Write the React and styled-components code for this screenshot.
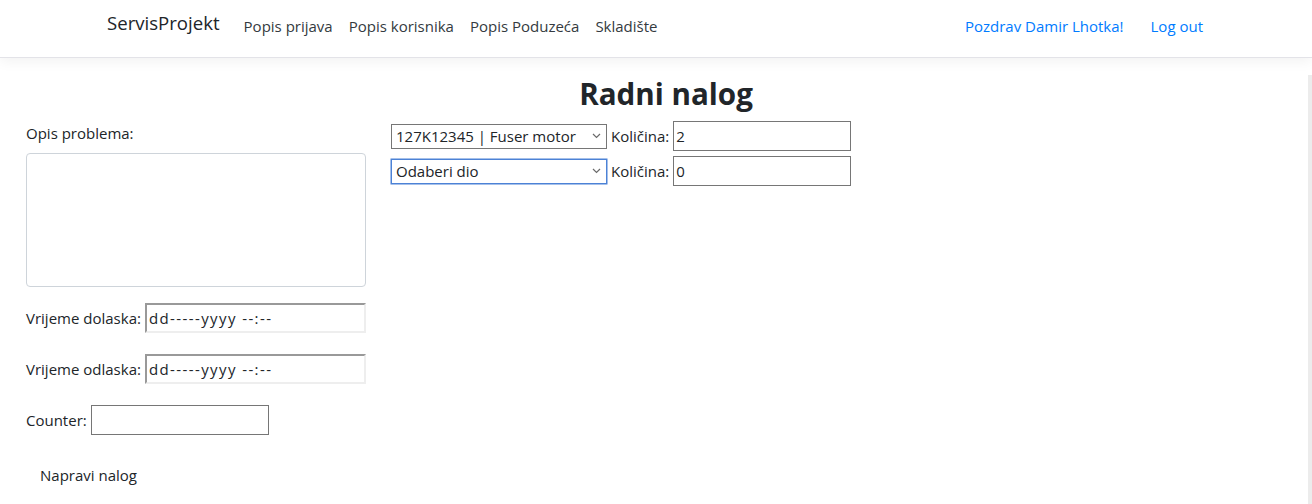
import React from "react";
import styled, { createGlobalStyle } from "styled-components";

const GlobalStyle = createGlobalStyle`
  html, body { margin: 0; padding: 0; background: #fff; }
  body {
    font-family: "Open Sans", "Noto Sans", sans-serif;
    font-size: 15px;
    color: #212529;
  }
  * { box-sizing: border-box; }
`;

const Page = styled.div`
  display: flex;
  width: 1312px;
  min-height: 504px;
`;

const Main = styled.div`
  flex: 1;
  display: flex;
  flex-direction: column;
`;

const ScrollStrip = styled.div`
  width: 4px;
  margin-top: 75px;
  background: #ececec;
`;

const Navbar = styled.nav`
  height: 58px;
  border-bottom: 1px solid #e3e3e8;
  box-shadow: 0 4px 12px rgba(0, 0, 0, 0.05);
  background: #fff;
  margin-right: -4px;
`;

const NavInner = styled.div`
  width: 1098px;
  margin: 0 auto;
  height: 100%;
  display: flex;
  align-items: center;
`;

const Brand = styled.a`
  font-size: 18.6px;
  color: #212529;
  margin-right: 16px;
  margin-top: -12px;
  text-decoration: none;
`;

const NavLinks = styled.div`
  display: flex;
  align-items: center;
  margin-top: -5px;
  margin-right: ${(p) => p.$mr || 0}px;
`;

const NavLink = styled.a`
  padding: 0 8px;
  font-size: 15px;
  color: ${(p) => (p.$accent ? "#007bff" : "#343a40")};
  text-decoration: none;
  margin-left: ${(p) => p.$ml || 0}px;
`;

const Spacer = styled.div`
  flex: 1;
`;

const Content = styled.div`
  padding: 15px 26px 0 26px;
  display: flex;
  flex-direction: column;
`;

const Title = styled.h2`
  margin: 2px 0 0 0;
  font-size: 29.6px;
  font-weight: 700;
  line-height: 38px;
  text-align: center;
  padding-left: 24px;
`;

const Columns = styled.div`
  display: flex;
  gap: 25px;
  margin-top: 8px;
`;

const LeftCol = styled.div`
  width: 340px;
  display: flex;
  flex-direction: column;
`;

const RightCol = styled.div`
  display: flex;
  flex-direction: column;
  gap: 5px;
`;

const Label = styled.label`
  font-size: 15px;
  line-height: 24px;
  color: #212529;
`;

const TextArea = styled.textarea`
  margin-top: 8px;
  width: 340px;
  height: 134px;
  border: 1px solid #ced4da;
  border-radius: 4px;
  resize: none;
  outline: none;
`;

const FieldRow = styled.div`
  display: flex;
  align-items: center;
  gap: 4px;
  margin-top: ${(p) => p.$mt || 0}px;
`;

const DateInput = styled.input`
  width: 221px;
  height: 30px;
  border-width: 2px;
  border-style: solid;
  border-color: #999 #eee #eee #999;
  padding: 0 2px;
  font-family: inherit;
  font-size: 15px;
  letter-spacing: 1.4px;
  color: #212529;
  outline: none;
`;

const TextInput = styled.input`
  width: 178px;
  height: 30px;
  border: 1px solid #767676;
  padding: 0 2px;
  font-family: inherit;
  font-size: 15px;
  color: #212529;
  outline: none;
  background: #fff;
`;

const Button = styled.button`
  margin-top: 21px;
  align-self: flex-start;
  background: transparent;
  border: none;
  padding: 7px 14px;
  font-family: inherit;
  font-size: 15px;
  line-height: 24px;
  color: #212529;
`;

const PartRow = styled.div`
  display: flex;
  align-items: center;
  gap: 4px;
`;

const SelectWrap = styled.div`
  position: relative;
  width: 216px;
  height: 25px;
`;

const Select = styled.select`
  appearance: none;
  width: 100%;
  height: 100%;
  border: 1px solid ${(p) => (p.$focused ? "#4c82d6" : "#767676")};
  box-shadow: ${(p) => (p.$focused ? "0 0 0 0.5px #4c82d6" : "none")};
  border-radius: 0;
  padding: 0 20px 0 4px;
  font-family: inherit;
  font-size: 15px;
  color: #212529;
  background: #fff;
  outline: none;
`;

const Chevron = styled.svg`
  position: absolute;
  right: 6px;
  top: 9px;
  pointer-events: none;
`;

const QtyLabel = styled.span`
  font-size: 15px;
  color: #212529;
`;

function PartSelect({ value, focused }) {
  return (
    <SelectWrap>
      <Select $focused={focused} defaultValue={value}>
        <option>{value}</option>
      </Select>
      <Chevron width="9" height="6" viewBox="0 0 9 6">
        <path d="M1 1 L4.5 4.5 L8 1" fill="none" stroke="#6b6b6b" strokeWidth="1.2" />
      </Chevron>
    </SelectWrap>
  );
}

export default function App() {
  return (
    <>
      <GlobalStyle />
      <Page>
        <Main>
          <Navbar>
            <NavInner>
              <Brand href="#">ServisProjekt</Brand>
              <NavLinks>
                <NavLink href="#">Popis prijava</NavLink>
                <NavLink href="#">Popis korisnika</NavLink>
                <NavLink href="#">Popis Poduzeća</NavLink>
                <NavLink href="#">Skladište</NavLink>
              </NavLinks>
              <Spacer />
              <NavLinks $mr={-6}>
                <NavLink href="#" $accent>Pozdrav Damir Lhotka!</NavLink>
                <NavLink href="#" $accent $ml={11}>Log out</NavLink>
              </NavLinks>
            </NavInner>
          </Navbar>
          <Content>
            <Title>Radni nalog</Title>
            <Columns>
              <LeftCol>
                <Label>Opis problema:</Label>
                <TextArea />
                <FieldRow $mt={16}>
                  <Label>Vrijeme dolaska:</Label>
                  <DateInput readOnly value="dd-----yyyy --:--" />
                </FieldRow>
                <FieldRow $mt={21}>
                  <Label>Vrijeme odlaska:</Label>
                  <DateInput readOnly value="dd-----yyyy --:--" />
                </FieldRow>
                <FieldRow $mt={21}>
                  <Label>Counter:</Label>
                  <TextInput readOnly value="" />
                </FieldRow>
                <Button>Napravi nalog</Button>
              </LeftCol>
              <RightCol>
                <PartRow>
                  <PartSelect value="127K12345 | Fuser motor" />
                  <QtyLabel>Količina:</QtyLabel>
                  <TextInput readOnly value="2" />
                </PartRow>
                <PartRow>
                  <PartSelect value="Odaberi dio" focused />
                  <QtyLabel>Količina:</QtyLabel>
                  <TextInput readOnly value="0" />
                </PartRow>
              </RightCol>
            </Columns>
          </Content>
        </Main>
        <ScrollStrip />
      </Page>
    </>
  );
}
